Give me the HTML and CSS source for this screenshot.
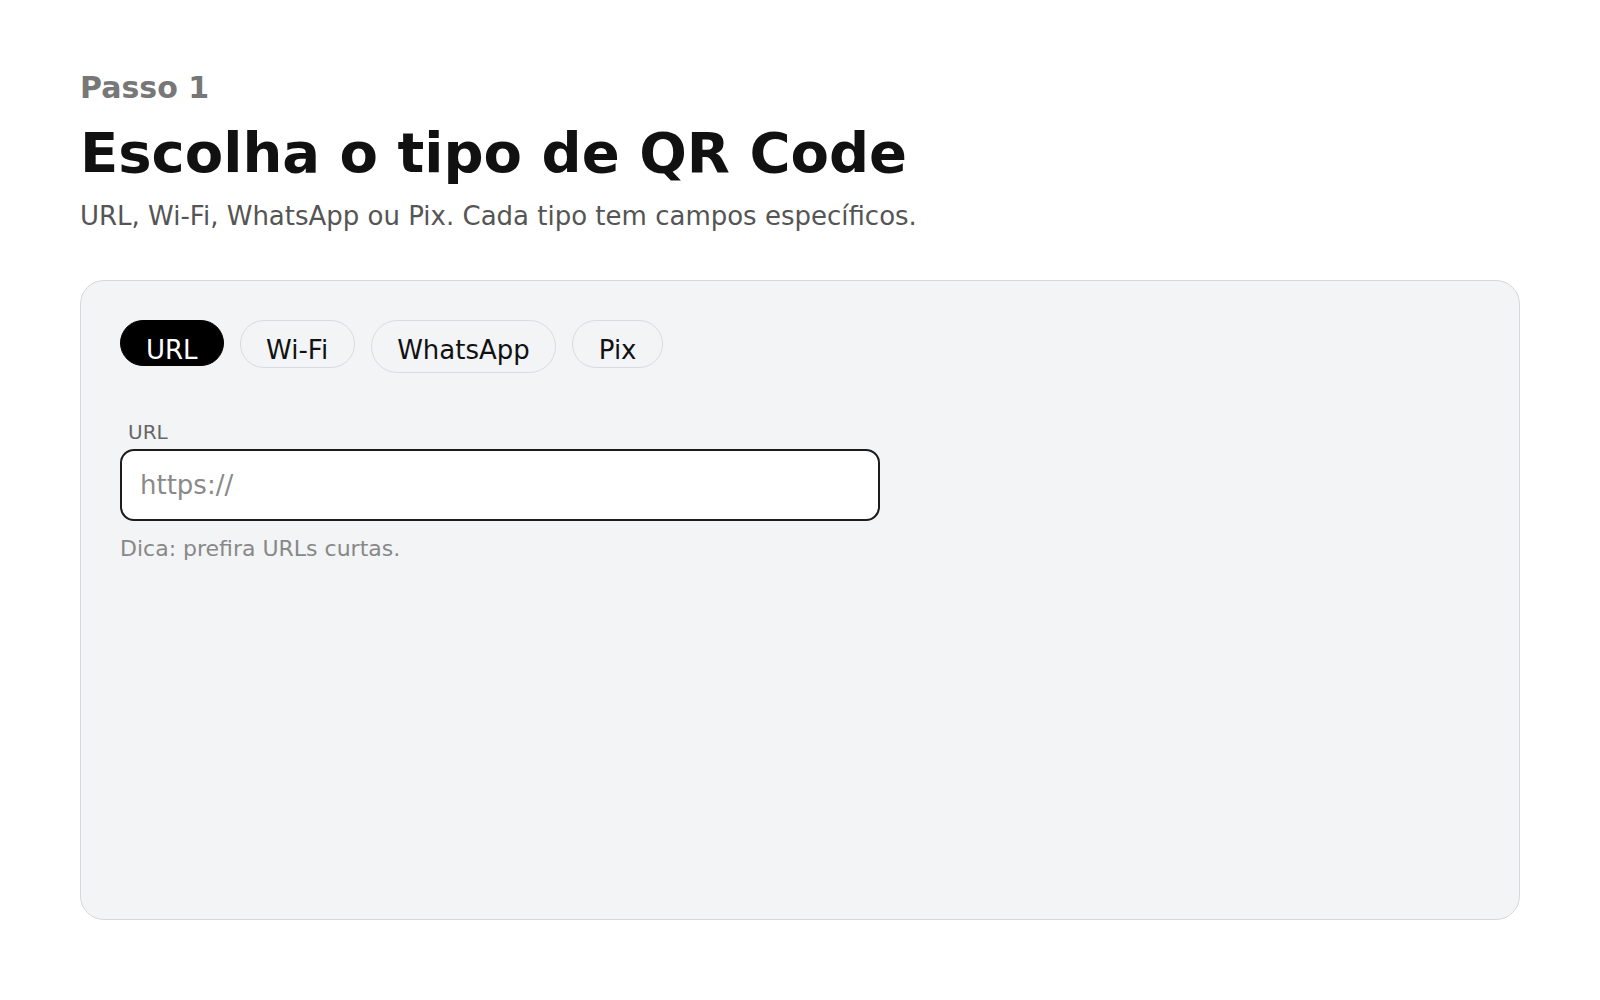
FILE: index.html
```html
<!DOCTYPE html>
<html lang="pt-BR">

<head>
    <meta charset="UTF-8">
    <meta name="viewport" content="width=device-width, initial-scale=1.0">
    <title>Gerador de QR Code</title>
    <link rel="stylesheet" href="styles.css">
</head>

<body>

    <main class="page">
        <!-- Cabeçalho do passo -->
        <header class="step-header">
            <p class="step-label">Passo 1</p>
            <h1>Escolha o tipo de QR Code</h1>
            <p class="step-desc">URL, Wi-Fi, WhatsApp ou Pix. Cada tipo tem campos específicos.</p>
        </header>

        <!-- Cartão com tipos e campos -->
        <section class="card">
            <div class="tabs">
                <button class="tab active">URL</button>
                <button class="tab">Wi-Fi</button>
                <button class="tab tab-tall">WhatsApp</button>
                <button class="tab">Pix</button>
            </div>

            <div class="field">
                <label for="url-input">URL</label>
                <input type="text" id="url-input" placeholder="https://">
                <p class="hint">Dica: prefira URLs curtas.</p>
            </div>
        </section>
    </main>

</body>

</html>
```

FILE: styles.css
```css
body {
    font-family: 'DejaVu Sans', 'Noto Sans', sans-serif;
    background: #fff;
    color: #111;
    margin: 0;
    padding: 0;
}

.page {
    padding: 70px 80px 80px;
}

.step-header p,
.step-header h1 {
    margin: 0;
}

.step-label {
    font-size: 30px;
    font-weight: bold;
    color: #777;
}

h1 {
    font-size: 56px;
    font-weight: bold;
    color: #111;
    margin-top: 15px !important;
}

.step-desc {
    font-size: 26px;
    color: #555;
    margin-top: 16px !important;
}

.card {
    margin-top: 49px;
    height: 640px;
    box-sizing: border-box;
    background: #f3f4f6;
    border: 1px solid #d6d8dd;
    border-radius: 24px;
    padding: 39px;
}

.tabs {
    display: flex;
    align-items: flex-start;
    gap: 16px;
}

.tab {
    font-family: inherit;
    font-size: 26px;
    line-height: 30px;
    color: #111;
    background: #f3f4f6;
    border: 1px solid #dadbdf;
    border-radius: 999px;
    padding: 14px 25.5px 2px;
    cursor: pointer;
}

.tab.active {
    background: #000;
    border-color: #000;
    color: #fff;
    padding: 14px 25px 0;
}

.tab-tall {
    padding-bottom: 7px;
}

.field {
    margin-top: 47px;
}

.field label {
    display: block;
    font-size: 20px;
    color: #666;
    padding: 0 8px;
    margin-bottom: 5px;
}

.field input {
    display: block;
    box-sizing: border-box;
    width: 760px;
    height: 72px;
    font-family: inherit;
    font-size: 26px;
    color: #111;
    background: #fff;
    border: 2px solid #1c1c1c;
    border-radius: 14px;
    padding: 0 18px;
    outline: none;
}

.field input::placeholder {
    color: #8a8a8a;
}

.hint {
    font-size: 22px;
    color: #888;
    margin: 15px 0 0;
}
```
